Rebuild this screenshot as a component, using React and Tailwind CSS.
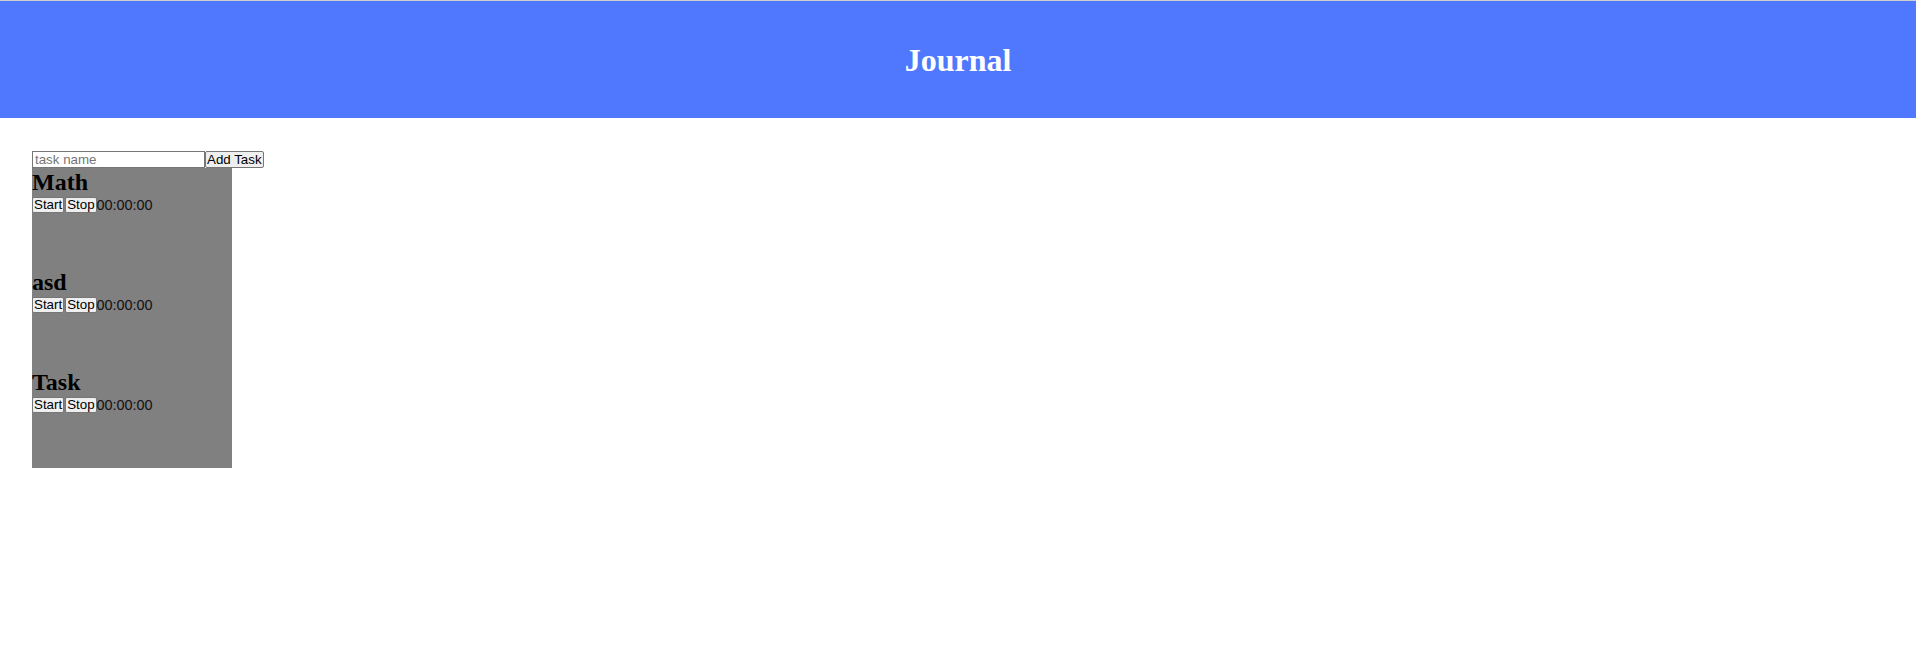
import React, { useState } from 'react';

const tasks = ['Math', 'asd', 'Task'];

const TaskItem = ({ name }) => {
  return (
    <div className="h-[100px]">
      <h2 className="text-[24px] leading-[29px] font-bold text-black font-['Liberation_Serif',serif]">{name}</h2>
      <div className="flex items-center font-['Liberation_Sans',Arial,sans-serif]">
        <button className="h-[16px] px-[1px] text-[13.33px] leading-[14px] bg-[#efefef] border border-[#767676] rounded-[2px] text-black">
          Start
        </button>
        <button className="ml-[1px] h-[16px] px-[1px] text-[13.33px] leading-[14px] bg-[#efefef] border border-[#767676] rounded-[2px] text-black">
          Stop
        </button>
        <span className="text-[14.4px] leading-[16px] text-[#111]">00:00:00</span>
      </div>
    </div>
  );
};

const App = () => {
  const [name, setName] = useState('');

  return (
    <div className="min-h-[667px] w-full bg-white">
      {/* Header */}
      <header className="h-[118px] border-t border-[#cfcfcf] bg-[#4f78ff] flex items-center justify-center">
        <h1 className="text-[32px] font-bold text-white font-['Liberation_Serif',serif]">Journal</h1>
      </header>

      <main className="pl-[32px] pt-[33px]">
        {/* Add task form */}
        <div className="flex items-center font-['Liberation_Sans',Arial,sans-serif]">
          <input
            type="text"
            value={name}
            onChange={(e) => setName(e.target.value)}
            placeholder="task name"
            className="w-[173px] h-[17px] px-[2px] text-[13.33px] leading-[15px] border border-[#767676] placeholder:text-[#757575] outline-none"
          />
          <button className="h-[17px] px-[1px] text-[13.33px] leading-[15px] bg-[#efefef] border border-[#767676] rounded-[2px] text-black">
            Add Task
          </button>
        </div>

        {/* Task list */}
        <div className="w-[200px] bg-[#808080]">
          {tasks.map((t) => (
            <TaskItem key={t} name={t} />
          ))}
        </div>
      </main>
    </div>
  );
};

export default App;
